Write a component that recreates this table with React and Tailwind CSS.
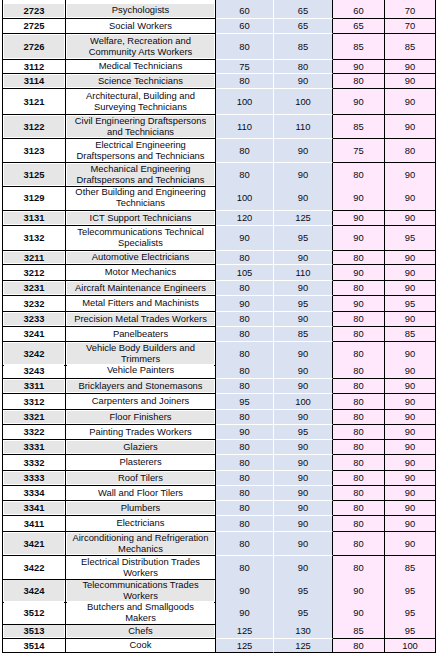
const rows = [
    { code: '2723', name: ['Psychologists'], h: 'h-[19px]', v: [60, 65, 60, 70] },
    { code: '2725', name: ['Social Workers'], h: 'h-[15px]', v: [60, 65, 65, 70] },
    { code: '2726', name: ['Welfare, Recreation and', 'Community Arts Workers'], h: 'h-[26px]', v: [80, 85, 85, 85] },
    { code: '3112', name: ['Medical Technicians'], h: 'h-[14px]', v: [75, 80, 90, 90] },
    { code: '3114', name: ['Science Technicians'], h: 'h-[15px]', v: [80, 90, 80, 90] },
    { code: '3121', name: ['Architectural, Building and', 'Surveying Technicians'], h: 'h-[26px]', v: [100, 100, 90, 90] },
    { code: '3122', name: ['Civil Engineering Draftspersons', 'and Technicians'], h: 'h-[24px]', v: [110, 110, 85, 90] },
    { code: '3123', name: ['Electrical Engineering', 'Draftspersons and Technicians'], h: 'h-[24px]', v: [80, 90, 75, 80] },
    { code: '3125', name: ['Mechanical Engineering', 'Draftspersons and Technicians'], h: 'h-[23px]', v: [80, 90, 80, 90] },
    { code: '3129', name: ['Other Building and Engineering', 'Technicians'], h: 'h-[25px]', v: [100, 90, 90, 90] },
    { code: '3131', name: ['ICT Support Technicians'], h: 'h-[15px]', v: [120, 125, 90, 90] },
    { code: '3132', name: ['Telecommunications Technical', 'Specialists'], h: 'h-[25px]', v: [90, 95, 90, 95] },
    { code: '3211', name: ['Automotive Electricians'], h: 'h-[14px]', v: [80, 90, 80, 90] },
    { code: '3212', name: ['Motor Mechanics'], h: 'h-[16px]', v: [105, 110, 90, 90] },
    { code: '3231', name: ['Aircraft Maintenance Engineers'], h: 'h-[15px]', v: [80, 90, 80, 90] },
    { code: '3232', name: ['Metal Fitters and Machinists'], h: 'h-[16px]', v: [90, 95, 90, 95] },
    { code: '3233', name: ['Precision Metal Trades Workers'], h: 'h-[15px]', v: [80, 90, 80, 90] },
    { code: '3241', name: ['Panelbeaters'], h: 'h-[15px]', v: [80, 85, 80, 85] },
    { code: '3242', name: ['Vehicle Body Builders and', 'Trimmers'], h: 'h-[21px]', v: [80, 90, 80, 90] },
    { code: '3243', name: ['Vehicle Painters'], h: 'h-[16px]', v: [80, 90, 80, 90] },
    { code: '3311', name: ['Bricklayers and Stonemasons'], h: 'h-[15px]', v: [80, 90, 80, 90] },
    { code: '3312', name: ['Carpenters and Joiners'], h: 'h-[16px]', v: [95, 100, 80, 90] },
    { code: '3321', name: ['Floor Finishers'], h: 'h-[15px]', v: [80, 90, 80, 90] },
    { code: '3322', name: ['Painting Trades Workers'], h: 'h-[15px]', v: [90, 95, 80, 90] },
    { code: '3331', name: ['Glaziers'], h: 'h-[15px]', v: [80, 90, 80, 90] },
    { code: '3332', name: ['Plasterers'], h: 'h-[16px]', v: [80, 90, 80, 90] },
    { code: '3333', name: ['Roof Tilers'], h: 'h-[15px]', v: [80, 90, 80, 90] },
    { code: '3334', name: ['Wall and Floor Tilers'], h: 'h-[15px]', v: [80, 90, 80, 90] },
    { code: '3341', name: ['Plumbers'], h: 'h-[15px]', v: [80, 90, 80, 90] },
    { code: '3411', name: ['Electricians'], h: 'h-[16px]', v: [80, 90, 80, 90] },
    { code: '3421', name: ['Airconditioning and Refrigeration', 'Mechanics'], h: 'h-[24px]', v: [80, 90, 80, 90] },
    { code: '3422', name: ['Electrical Distribution Trades', 'Workers'], h: 'h-[23px]', v: [80, 90, 80, 85] },
    { code: '3424', name: ['Telecommunications Trades', 'Workers'], h: 'h-[22px]', v: [90, 95, 90, 95] },
    { code: '3512', name: ['Butchers and Smallgoods', 'Makers'], h: 'h-[23px]', v: [90, 95, 90, 95] },
    { code: '3513', name: ['Chefs'], h: 'h-[15px]', v: [125, 130, 85, 95] },
    { code: '3514', name: ['Cook'], h: 'h-[14px]', v: [125, 125, 80, 100] },
];

const Row = ({ row, index, last }) => {
    const shade = index % 2 === 0 ? 'bg-[#e6e6e6]' : 'bg-white';
    const blueBottom = last ? 'border-b-black' : 'border-b-white';
    const first = index === 0 ? 'pt-[4px]' : '';

    return (
        <div className={`grid grid-cols-[63px_150px_58px_59px_52px_50px] ${row.h}`}>
            <div className={`flex items-center justify-center border-b border-r border-black p-px bg-clip-content ${shade} ${first}`}>
                <span className="font-bold">{row.code}</span>
            </div>
            <div className={`flex flex-col items-center justify-center border-b border-r border-black p-px bg-clip-content leading-[10.7px] whitespace-nowrap ${shade} ${first}`}>
                {row.name.map((line) => (
                    <span key={line}>{line}</span>
                ))}
            </div>
            <div className={`flex items-center justify-center border-b border-r border-r-white bg-[#dae2f2] ${blueBottom} ${first}`}>
                {row.v[0]}
            </div>
            <div className={`flex items-center justify-center border-b border-r border-r-black bg-[#dae2f2] ${blueBottom} ${first}`}>
                {row.v[1]}
            </div>
            <div className={`flex items-center justify-center border-b border-r border-black bg-[#ffe8fc] ${first}`}>
                {row.v[2]}
            </div>
            <div className={`flex items-center justify-center border-b border-black bg-[#ffe8fc] ${first}`}>
                {row.v[3]}
            </div>
        </div>
    );
};

const App = () => {
    return (
        <div className="w-[437px] h-[659px] bg-white pl-[2px] overflow-hidden">
            <div className="w-[434px] border-l border-r border-black text-[9.4px] leading-none text-[#0a0a14] font-['Liberation_Sans',Arial,sans-serif]">
                {rows.map((row, i) => (
                    <Row key={row.code} row={row} index={i} last={i === rows.length - 1} />
                ))}
            </div>
        </div>
    );
};

export default App;
